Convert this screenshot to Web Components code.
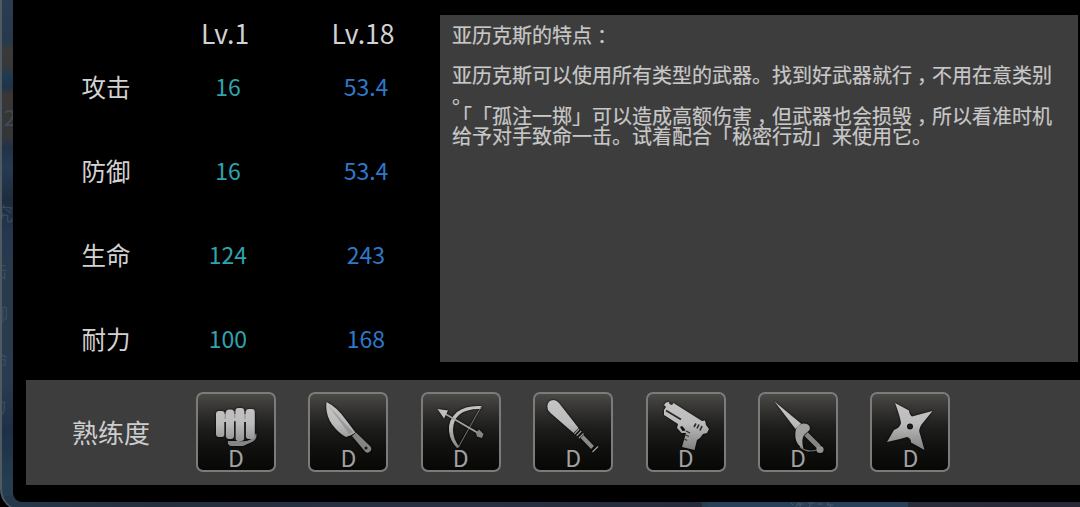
<!DOCTYPE html>
<html lang="zh-CN">
<head>
<meta charset="utf-8">
<title>亚历克斯</title>
<style>
    body {
        margin: 0;
        width: 1080px;
        height: 507px;
        overflow: hidden;
        background: #000;
        font-family: "Noto Sans CJK SC", sans-serif;
        color: #d2d2d2;
    }
</style>
</head>
<body>

<game-backdrop>
    <character-dialog>
        <stat-table slot="stats">
            <stat-row label="攻击" first="16" last="53.4"></stat-row>
            <stat-row label="防御" first="16" last="53.4"></stat-row>
            <stat-row label="生命" first="124" last="243"></stat-row>
            <stat-row label="耐力" first="100" last="168"></stat-row>
        </stat-table>
        <trait-panel slot="traits"></trait-panel>
        <mastery-bar slot="mastery" label="熟练度">
            <weapon-tile icon="fist" grade="D"></weapon-tile>
            <weapon-tile icon="knife" grade="D"></weapon-tile>
            <weapon-tile icon="bow" grade="D"></weapon-tile>
            <weapon-tile icon="bat" grade="D"></weapon-tile>
            <weapon-tile icon="pistol" grade="D"></weapon-tile>
            <weapon-tile icon="rapier" grade="D"></weapon-tile>
            <weapon-tile icon="shuriken" grade="D"></weapon-tile>
        </mastery-bar>
    </character-dialog>
</game-backdrop>

<script>
    (function() {
        // each icon is drawn in the 80x80 box of its tile
        const icons = {
            fist: `
                <path d="M32 49L43 49Q56 51 60 41Q62 47 56 50L47 54H35Q31 53 32 49Z" fill="#858585"/>
                <rect x="20" y="19" width="8.6" height="26" rx="3"/>
                <rect x="30" y="17.5" width="8" height="29.5" rx="3"/>
                <rect x="39.4" y="16" width="8.8" height="33" rx="3"/>
                <rect x="49.8" y="17" width="9" height="30" rx="3"/>
                <path d="M26 22H54V30H26Z"/>
                <path d="M29.2 20V27M38.8 19V26M49 19V27" stroke="#8a8a8a" stroke-width="1"/>
                <path d="M29.2 30V45M38.8 29V48M49 30V48" stroke="#252524" stroke-width="1.3"/>`,
            knife: `
                <path d="M18.5 10Q29 15 38 28L47.5 40.5L43.5 43L38 45Q31 41.5 24.5 33Q17 23 18.5 10Z"/>
                <path d="M20 13L45 40L41 42Z" fill="#777" opacity=".45"/>
                <path d="M44 44L48 40.5L62.5 54.5A3.8 3.8 0 0 1 57.5 60Z" fill="#858585"/>
                <circle cx="58" cy="56" r="1.5" fill="#181816"/>`,
            bow: `
                <path d="M60.5 14Q45 13 36 20Q27 28 28 39Q29 49 36 56L38.5 55Q32 47 32 38Q32 28 38.5 22.5Q46 16.5 60 17Z"/>
                <path d="M60 15L37.5 55" stroke="#777" stroke-width="1"/>
                <path d="M21 20L57 41" stroke="#a0a0a0" stroke-width="2"/>
                <path d="M16.5 17L27 18.5L25.5 21.5L23 26.5Z"/>
                <path d="M55 41L58 37.5L62.5 42L61 46L56 44.5Z" fill="#858585"/>`,
            bat: `
                <path d="M15 18Q13 11 18 8.5Q22 6.5 26 11L45.5 36L40.5 41L17.5 21Z"/>
                <path d="M41.5 42L46 37M43.7 43.8L48.2 39M46 46L50.5 41.5" stroke="#969696" stroke-width="1.3"/>
                <path d="M49 44.5L59.5 55.5" stroke="#8a8a8a" stroke-width="4"/>
                <path d="M59.5 60L65 54.5" stroke="#969696" stroke-width="1.5"/>`,
            pistol: `
                <path fill-rule="evenodd" d="M18 13L20 10.5L23 10L23.5 12L26 13L27.5 11L56 29L59 28.5L60 33L63 37L61 41L57 42L54 46L51 48L48.5 58L36 55L40 41L35.5 41L31 36L32 32L18 23L18 18L20 15ZM34 35L36.5 39L39.5 38.5L38 36L36 34Z"/>
                <path d="M20 18.5L35 27.5" stroke="#292928" stroke-width="1.8"/>
                <path d="M50 31.5L48 35M53 32.5L51 36.5M56 34L54 38.5" stroke="#292928" stroke-width="1.6"/>
                <path d="M40 39L44 41M39.5 43L43 44.5M38.5 47L41 48.5" stroke="#333" stroke-width="1.3"/>`,
            rapier: `
                <path d="M16.5 9.5L43 31.5L37.5 37Z"/>
                <path d="M48 42L61 55" stroke="#858585" stroke-width="5"/>
                <circle cx="62" cy="57.5" r="3.6" fill="#929292"/>
                <path d="M38 37Q42 30 49 32Q53 34 51.5 38L46 43Q43 48 45.5 57Q38.5 53 37.5 46Q37 40 38 37Z" fill="#a0a0a0"/>
                <path d="M42 55Q49 61 59 58" fill="none" stroke="#777" stroke-width="1.2"/>`,
            shuriken: `
                <path fill-rule="evenodd" d="M25 11L39 18.5Q39.5 23 42 24.5Q51 22 62.5 19L51.5 32.5Q48 38 50 42L54.5 58L41 50.5Q41 46 37 45Q31 47 17 50L24 38Q30 36 31 31Q30 24 25 11ZM43 34.5A3 3 0 1 0 37 34.5A3 3 0 1 0 43 34.5Z"/>`
        };

        // the lobby screen that shows round the edge of the dialog
        class GameBackdrop extends HTMLElement {
            constructor() {
                super();
                this.attachShadow({ mode: "open" }).innerHTML = `
    <style>
        :host {
            display: block;
            position: relative;
            box-sizing: border-box;
            height: 529px;
            margin-top: -18px;
            padding: 18px 0 0 11px;
            border: solid #505a62;
            border-width: 0 0 1px 2px;
            border-bottom-left-radius: 22px;
            overflow: hidden;
            background:
                linear-gradient(90deg, #25384b 0, #252e3f 160px, #293044 450px, #252b3b 700px, transparent 700px) 0 100% / 100% 14px no-repeat,
                linear-gradient(90deg, #28415b 0, #28415b 200px, #282c3b 200px, #292938) 706px 100% / 372px 14px no-repeat,
                linear-gradient(#2c3e51 0, #27394d 52px, #263a49 60px, #3b3939 68px, #373839 85px, #1e3b50 94px, #1e3349 104px, #393635 112px, #343538 156px, #1f3248 166px, #263b51 185px, #1e2c3e 218px, #263850 255px, #293a4c 290px, #293b4e 400px, #1d3047 450px, #263e50 500px);
        }

        .faint {
            position: absolute;
            right: calc(100% - 11px);
            font-size: 18px;
            line-height: 20px;
            color: #45576a;
            opacity: .65;
            white-space: nowrap;
        }

        svg {
            position: absolute;
            left: 788px;
            top: 520px;
        }
    </style>
    <span class="faint" style="top: 124px; right: calc(100% - 14px); font-size: 22px">2</span>
    <span class="faint" style="top: 221px">究</span>
    <span class="faint" style="top: 278px; right: calc(100% - 6px)">击</span>
    <span class="faint" style="top: 321px; right: calc(100% - 6px)">御</span>
    <span class="faint" style="top: 367px; right: calc(100% - 6px)">命</span>
    <span class="faint" style="top: 413px; right: calc(100% - 5px)">力</span>
    <svg width="46" height="5" stroke="#4b5966" fill="none">
        <path d="M1 1L3 3M9 0L6 5M7 2H13M10 2V5M18 1H25M22 1L19 5M28 2H33M39 0L37 3H43M41 3L40 5"/>
    </svg>
    <slot></slot>
                `;
            }
        }

        class CharacterDialog extends HTMLElement {
            constructor() {
                super();
                this.attachShadow({ mode: "open" }).innerHTML = `
    <style>
        :host {
            display: block;
            position: relative;
            box-sizing: border-box;
            height: 502px;
            background: #000;
            border-bottom-left-radius: 9px;
        }

        .top {
            display: flex;
            justify-content: space-between;
            box-sizing: border-box;
            height: 380px;
            padding: 0 2px 0 40px;
        }
    </style>
    <div class="top">
        <slot name="stats"></slot>
        <slot name="traits"></slot>
    </div>
    <slot name="mastery"></slot>
                `;
            }
        }

        class StatTable extends HTMLElement {
            constructor() {
                super();
                this.attachShadow({ mode: "open" }).innerHTML = `
    <style>
        :host {
            display: block;
            padding-top: 20px;
        }

        .head {
            display: grid;
            grid-template-columns: 103px 138px 138px;
            height: 25px;
            line-height: 25px;
            font-size: 26.5px;
            text-align: center;
        }
    </style>
    <div class="head"><span></span><span>Lv.1</span><span>Lv.18</span></div>
    <slot></slot>
                `;
            }
        }

        class StatRow extends HTMLElement {
            constructor() {
                super();
                this.attachShadow({ mode: "open" }).innerHTML = `
    <style>
        :host {
            display: grid;
            grid-template-columns: 106px 138px 138px;
            align-items: center;
            height: 84px;
            line-height: 30px;
            font-size: 23px;
            text-align: center;
        }

        .label {
            font-size: 24.5px;
        }

        .first, .last {
            padding-bottom: 2px;
        }

        .first {
            color: #2fa3ae;
        }

        .last {
            color: #2c79cc;
        }
    </style>
    <span class="label">${this.getAttribute("label")}</span>
    <span class="first">${this.getAttribute("first")}</span>
    <span class="last">${this.getAttribute("last")}</span>
                `;
            }
        }

        class TraitPanel extends HTMLElement {
            constructor() {
                super();
                this.attachShadow({ mode: "open" }).innerHTML = `
    <style>
        :host {
            display: block;
            box-sizing: border-box;
            width: 638px;
            height: 347px;
            margin-top: 15px;
            padding: 10px 0 0 12px;
            background: #3d3d3d;
            font-size: 20px;
            line-height: 20.2px;
            color: #c8c8c8;
            -webkit-text-stroke: .2px #c8c8c8;
            white-space: nowrap;
            text-spacing-trim: space-all;
        }

        p {
            margin: 0;
            min-height: 20.2px;
        }

        /* punctuation that sits in the middle of its cell */
        i {
            display: inline-block;
            width: 1em;
            font-style: normal;
            font-feature-settings: "halt";
            text-align: center;
        }
    </style>
    <p>亚历克斯的特点<i>：</i></p>
    <p></p>
    <p>亚历克斯可以使用所有类型的武器。找到好武器就行<i>，</i>不用在意类别</p>
    <p>。</p>
    <p>「「孤注一掷」可以造成高额伤害<i>，</i>但武器也会损毁<i>，</i>所以看准时机</p>
    <p>给予对手致命一击。试着配合「秘密行动」来使用它。</p>
                `;
            }
        }

        class MasteryBar extends HTMLElement {
            constructor() {
                super();
                this.attachShadow({ mode: "open" }).innerHTML = `
    <style>
        :host {
            display: flex;
            align-items: center;
            box-sizing: border-box;
            height: 105px;
            margin-left: 13px;
            padding-bottom: 1px;
            background: #3d3d3d;
        }

        .label {
            width: 170px;
            padding-bottom: 2px;
            text-align: center;
            font-size: 26px;
            color: #cdcdcd;
        }

        .tiles {
            display: flex;
            gap: 32.4px;
        }
    </style>
    <div class="label">${this.getAttribute("label")}</div>
    <div class="tiles"><slot></slot></div>
                `;
            }
        }

        class WeaponTile extends HTMLElement {
            constructor() {
                super();
                const icon = this.getAttribute("icon");
                this.attachShadow({ mode: "open" }).innerHTML = `
    <style>
        :host {
            display: grid;
            box-sizing: border-box;
            width: 80px;
            height: 80px;
            border: 2px solid #7b7b79;
            border-radius: 7px;
            background: linear-gradient(#4b4946 0, #31302e 18px, #1d1d1b 34px, #11110f 52px, #070706 100%);
            overflow: hidden;
        }

        svg, span {
            grid-area: 1 / 1;
        }

        svg {
            width: 80px;
            height: 80px;
            margin: -2px;
            filter: drop-shadow(0 0 1px #000);
        }

        span {
            align-self: end;
            justify-self: center;
            padding-bottom: 1px;
            line-height: 23px;
            font-size: 23px;
            color: #a2a2a2;
            z-index: 1;
        }
    </style>
    <svg viewBox="0 0 80 80" fill="url(#metal)">
        <defs>
            <linearGradient id="metal" gradientUnits="userSpaceOnUse" x1="0" y1="10" x2="0" y2="58">
                <stop offset="0" stop-color="#c4c4c4"/>
                <stop offset=".45" stop-color="#bcbcbc"/>
                <stop offset="1" stop-color="#808080"/>
            </linearGradient>
        </defs>
        ${icons[icon]}
    </svg>
    <span>${this.getAttribute("grade")}</span>
                `;
            }
        }

        customElements.define("game-backdrop", GameBackdrop);
        customElements.define("character-dialog", CharacterDialog);
        customElements.define("stat-table", StatTable);
        customElements.define("stat-row", StatRow);
        customElements.define("trait-panel", TraitPanel);
        customElements.define("mastery-bar", MasteryBar);
        customElements.define("weapon-tile", WeaponTile);
    })()
</script>
</body>
</html>
